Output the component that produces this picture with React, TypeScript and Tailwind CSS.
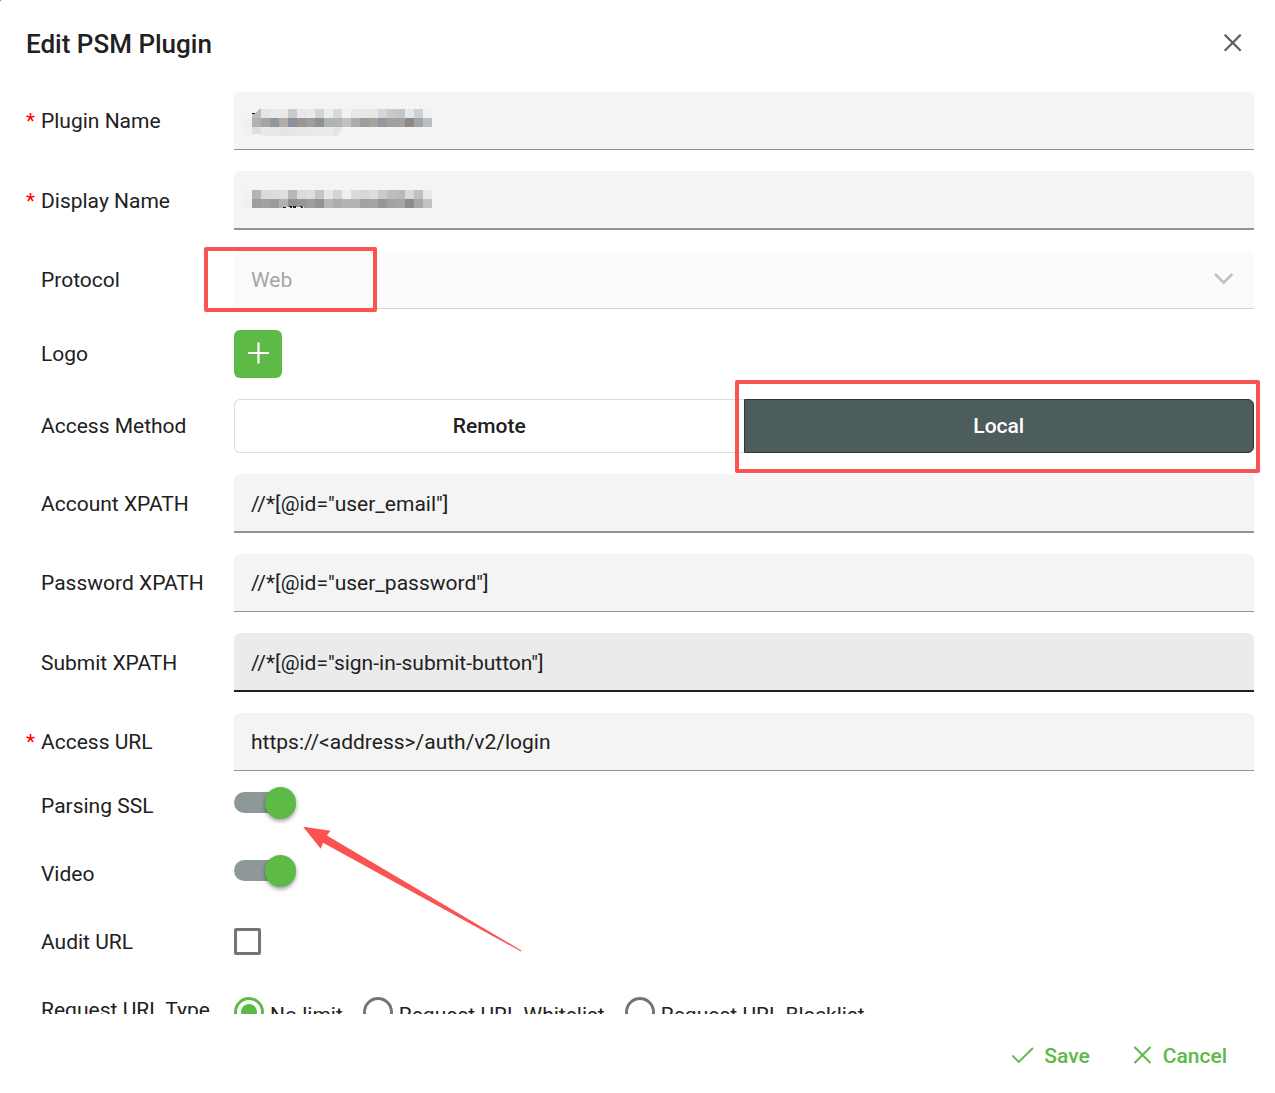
import { useState } from "react";
import type { ReactNode } from "react";
import { clsx } from "clsx";

const PLUGIN_MASK = [
    ["#f4f4f4", "#bdbdbd", "#e3e5e7", "#e8e9e9", "#e8e9e9", "#cacbcb", "#e5e7e8", "#e9ebea", "#d1d4d6", "#ebeced", "#d8dbda", "#f3f3f1", "#e7e8e8", "#e7e8e8", "#e6e7e8", "#d3d6d6", "#cbc8c4", "#c1c6c9", "#e5e8ea", "#cecfd0", "#eff1f2"],
    ["#f1f0ef", "#b1b1b1", "#a8a4a1", "#949799", "#b2ada7", "#8a919a", "#9b9591", "#9c9fa0", "#909294", "#b1b3b5", "#b2b5b7", "#c4c0bc", "#a9aeae", "#9e9c9d", "#a4a39f", "#9597a0", "#9fa09f", "#a0a1a0", "#8f8883", "#a1a4ab", "#bcbdbf"],
    ["#f2f1f0", "#dcdddd", "#e8e9ea", "#e8e8ea", "#e3e4e5", "#e7e7e5", "#e8e8e6", "#e7e9ea", "#e8eaed", "#eaebeb", "#e6e5e3"],
];

const DISPLAY_MASK = [
    ["#f2f2f2", "#b4b4b4", "#dadada", "#dddddd", "#dedede", "#b7b7b7", "#dadada", "#dddddd", "#c5c5c5", "#e7e7e7", "#d3d3d3", "#efefef", "#dadada", "#d7d7d7", "#dcdcdc", "#cacaca", "#bebebe", "#bababa", "#d9d9d9", "#c0c0c0", "#e8e8e8"],
    ["#f0f0f0", "#9d9d9d", "#a2a2a2", "#9c9c9c", "#b2b2b2", "#919191", "#979797", "#9e9e9e", "#939393", "#b6b6b6", "#acacac", "#b4b4b4", "#b3b3b3", "#a3a3a3", "#a5a5a5", "#979797", "#a2a2a2", "#a5a5a5", "#8c8c8c", "#a8a8a8", "#c1c1c1"],
];

const REQUEST_TYPES = ["No limit", "Request URL Whitelist", "Request URL Blacklist"];

function Label({ htmlFor, required, children }: { htmlFor?: string; required?: boolean; children: ReactNode }) {
    return (
        <label htmlFor={htmlFor} className="flex w-[208px] shrink-0 whitespace-nowrap">
            <span className="w-[15px] text-[#ff0000]">{required && "*"}</span>
            {children}
        </label>
    );
}

function Mosaic({ rows, children }: { rows: string[][]; children: ReactNode }) {
    return (
        <svg width="190" height="27" shapeRendering="crispEdges">
            {rows.map((row, y) =>
                row.map((fill, x) => <rect key={`${x}-${y}`} x={x * 9} y={y * 9} width="9" height="9" fill={fill} />)
            )}
            {children}
        </svg>
    );
}

interface TextRowProps {
    id: string;
    label: string;
    value?: string;
    required?: boolean;
    thick?: boolean;
    active?: boolean;
    children?: ReactNode;
}

function TextRow({ id, label, value = "", required, thick, active, children }: TextRowProps) {
    return (
        <div className="flex items-center">
            <Label htmlFor={id} required={required}>{label}</Label>
            <div className="relative flex flex-1">
                <input
                    id={id}
                    type="text"
                    defaultValue={value}
                    className={clsx(
                        "box-content min-w-0 flex-1 rounded-t-md px-[17px] outline-none",
                        thick ? "h-[55px] border-b-2 pt-0.5" : "h-[57px] border-b",
                        active ? "border-[#212121] bg-[#ebebeb]" : "border-[#949494] bg-[#f4f4f4]"
                    )}
                />
                {children}
            </div>
        </div>
    );
}

function Switch({ id }: { id: string }) {
    return (
        <input
            id={id}
            type="checkbox"
            role="switch"
            defaultChecked
            className="relative mb-1.5 block h-8 w-[62px] appearance-none before:absolute before:top-[5px] before:left-0 before:h-[21px] before:w-14 before:rounded-full before:bg-[#8f9899] after:absolute after:top-0 after:left-0 after:h-8 after:w-[31px] after:rounded-full after:bg-white after:shadow-[0_2px_4px_rgba(0,0,0,0.4)] checked:after:left-[31px] checked:after:bg-[#5dba46]"
        />
    );
}

export default function App() {
    const [method, setMethod] = useState("Local");
    const [requestType, setRequestType] = useState("No limit");

    return (
        <div className="h-screen bg-[#666]">
            <form
                role="dialog"
                aria-labelledby="title"
                onSubmit={(e) => e.preventDefault()}
                className="flex h-full flex-col rounded-tl-xs bg-white font-[Roboto,sans-serif] text-[21px] leading-7 text-[#212121]"
            >
                <header className="flex h-[88px] shrink-0 items-center justify-between pr-8 pl-[26px]">
                    <h1 id="title" className="text-[26px] font-medium">Edit PSM Plugin</h1>
                    <button type="button" aria-label="Close" className="text-[#5f5f5f]">
                        <svg width="20" height="20" viewBox="0 0 20 20" fill="none" stroke="currentColor" strokeWidth="2.200">
                            <path d="M1.700 .7l16 16M17.700 .7L1.700 16.700" />
                        </svg>
                    </button>
                </header>

                <main className="min-h-0 flex-1 overflow-y-auto pt-1 pr-[21px] pl-[26px] [scrollbar-width:none]">
                    <div className="flex flex-col gap-[21px]">
                        <TextRow id="plugin-name" label="Plugin Name" required>
                            <div className="pointer-events-none absolute top-[17px] left-[9px]">
                                <Mosaic rows={PLUGIN_MASK}>
                                    <path d="M9 0h7l-4 4H9zM9 25h6l6 2H9zM99 20l-4 7h4z" fill="#f4f4f4" />
                                    <path d="M9 4h3v1H9z" fill="#222" />
                                </Mosaic>
                            </div>
                        </TextRow>
                        <TextRow id="display-name" label="Display Name" required thick>
                            <div className="pointer-events-none absolute top-[19px] left-[9px]">
                                <Mosaic rows={DISPLAY_MASK}>
                                    <path d="M42 17h19v1H42z" fill="#f4f4f4" />
                                    <path d="M40 17h3v1h-3zM46 16h3v1h-3zM47 17h2v1h-2zM50 16h3v2h-3zM57 16h2v1h-2zM58 17h2v1h-2z" fill="#222" />
                                </Mosaic>
                            </div>
                        </TextRow>

                        <div className="flex items-center">
                            <Label htmlFor="protocol">Protocol</Label>
                            <div className="relative flex flex-1">
                                <select
                                    id="protocol"
                                    disabled
                                    className="box-content h-[57px] flex-1 appearance-none rounded-t-md border-b border-[#d4d4d4] bg-[#fbfbfb] px-[17px] text-[#a6a6a6] opacity-100"
                                >
                                    <option>Web</option>
                                </select>
                                <svg className="pointer-events-none absolute top-[18px] right-5 text-[#c2c2c2]" width="20" height="20" fill="none" stroke="currentColor" strokeWidth="2.500">
                                    <path d="M1 5l8.700 8.700L18.400 5" />
                                </svg>
                                <div className="pointer-events-none absolute -top-1 left-[-30px] h-[65px] w-[173px] rounded-xs border-4 border-[#fc5252]" />
                            </div>
                        </div>

                        <div className="flex items-center">
                            <Label htmlFor="logo">Logo</Label>
                            <button id="logo" type="button" aria-label="Add logo" className="flex size-12 items-center justify-center rounded-md bg-[#5dba46] text-white">
                                <svg width="22" height="24" fill="none" stroke="currentColor" strokeWidth="2.200">
                                    <path d="M1 11h21M11.500 .5v21" />
                                </svg>
                            </button>
                        </div>

                        <div className="flex items-center">
                            <Label>Access Method</Label>
                            <div role="group" aria-label="Access Method" className="flex flex-1 font-medium">
                                {["Remote", "Local"].map((name) => (
                                    <button
                                        key={name}
                                        type="button"
                                        aria-pressed={method === name}
                                        onClick={() => setMethod(name)}
                                        className={clsx(
                                            "relative h-[54px] flex-1 border first:rounded-l-md first:border-r-0 last:rounded-r-md",
                                            method === name ? "border-[#263a3c] bg-[#4d5c5c] text-white" : "border-[#dcdfdf] bg-white"
                                        )}
                                    >
                                        {name}
                                        {name === "Local" && (
                                            <span className="pointer-events-none absolute -top-5 -right-[7px] -bottom-[21px] -left-2.5 rounded-xs border-4 border-[#fc5252]" />
                                        )}
                                    </button>
                                ))}
                            </div>
                        </div>

                        <TextRow id="account-xpath" label="Account XPATH" value={'//*[@id="user_email"]'} thick />
                        <TextRow id="password-xpath" label="Password XPATH" value={'//*[@id="user_password"]'} />
                        <TextRow id="submit-xpath" label="Submit XPATH" value={'//*[@id="sign-in-submit-button"]'} thick active />
                        <TextRow id="access-url" label="Access URL" value="https://<address>/auth/v2/login" required />
                    </div>

                    <div className="pt-px">
                        <div className="flex h-[68px] items-center">
                            <Label htmlFor="parsing-ssl">Parsing SSL</Label>
                            <div className="relative">
                                <Switch id="parsing-ssl" />
                                <svg className="pointer-events-none absolute top-10 left-[69px]" width="219" height="125" fill="#fc5252">
                                    <path d="M0 -.3l27.500 4-3.600 4.700L218.500 123.500l-.5 1L20 15.700l-2.300 6z" />
                                </svg>
                            </div>
                        </div>
                        <div className="flex h-[68px] items-center">
                            <Label htmlFor="video">Video</Label>
                            <Switch id="video" />
                        </div>
                        <div className="flex h-[68px] items-center">
                            <Label htmlFor="audit-url">Audit URL</Label>
                            <input
                                id="audit-url"
                                type="checkbox"
                                className="mb-px size-[27px] appearance-none rounded-xs border-3 border-[#757575] checked:bg-[#5dba46]"
                            />
                        </div>
                        <div className="flex h-[68px] items-center">
                            <Label>Request URL Type</Label>
                            <div role="radiogroup" aria-label="Request URL Type" className="flex gap-5 pt-1.5">
                                {REQUEST_TYPES.map((type) => (
                                    <label key={type} className="flex items-start gap-1.5">
                                        <input
                                            type="radio"
                                            name="request-type"
                                            checked={requestType === type}
                                            onChange={() => setRequestType(type)}
                                            className="grid size-[30px] appearance-none place-items-center rounded-full border-3 border-[#757575] before:size-4 before:rounded-full checked:border-[#5dba46] checked:before:bg-[#5dba46]"
                                        />
                                        <span className="pt-1">{type}</span>
                                    </label>
                                ))}
                            </div>
                        </div>
                    </div>
                </main>

                <footer className="flex h-[79px] shrink-0 items-center justify-end gap-[41px] pr-12 pt-1 font-medium text-[#5dba46]">
                    <button type="submit" className="flex items-center gap-2.5">
                        <svg width="22" height="22" fill="none" stroke="currentColor" strokeWidth="1.800">
                            <path d="M.3 10.500l6.500 6.500L20.900 3" />
                        </svg>
                        Save
                    </button>
                    <button type="button" className="flex items-center gap-2.5">
                        <svg width="22" height="22" fill="none" stroke="currentColor" strokeWidth="2">
                            <path d="M3.500 2l16 16M19.500 2l-16 16" />
                        </svg>
                        Cancel
                    </button>
                </footer>
            </form>
        </div>
    );
}
